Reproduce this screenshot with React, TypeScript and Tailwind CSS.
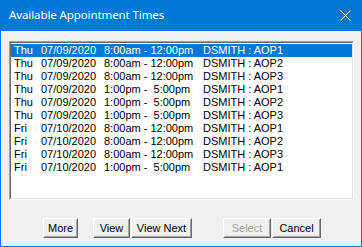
import React from "react";

const rows = [
  ["Thu", "07/09/2020", "8:00am - 12:00pm", "DSMITH : AOP1"],
  ["Thu", "07/09/2020", "8:00am - 12:00pm", "DSMITH : AOP2"],
  ["Thu", "07/09/2020", "8:00am - 12:00pm", "DSMITH : AOP3"],
  ["Thu", "07/09/2020", "1:00pm -  5:00pm", "DSMITH : AOP1"],
  ["Thu", "07/09/2020", "1:00pm -  5:00pm", "DSMITH : AOP2"],
  ["Thu", "07/09/2020", "1:00pm -  5:00pm", "DSMITH : AOP3"],
  ["Fri", "07/10/2020", "8:00am - 12:00pm", "DSMITH : AOP1"],
  ["Fri", "07/10/2020", "8:00am - 12:00pm", "DSMITH : AOP2"],
  ["Fri", "07/10/2020", "8:00am - 12:00pm", "DSMITH : AOP3"],
  ["Fri", "07/10/2020", "1:00pm -  5:00pm", "DSMITH : AOP1"],
];

function Btn({ label, w, disabled }: { label: string; w: string; disabled?: boolean }) {
  return (
    <div
      className={`${w} h-[20px] border border-t-white border-l-white border-b-[#696969] border-r-[#696969] bg-[#f0f0f0]`}
    >
      <div className="h-full w-full border border-t-[#f0f0f0] border-l-[#f0f0f0] border-b-[#a0a0a0] border-r-[#a0a0a0] flex items-center justify-center">
        <span
          className={`text-[11px] leading-[13px] ${disabled ? "text-[#a0a0a0]" : "text-black"}`}
          style={{ fontFamily: '"Liberation Sans", Arial, sans-serif' }}
        >
          {label}
        </span>
      </div>
    </div>
  );
}

export default function App() {
  return (
    <div className="w-[362px] h-[247px] bg-[#0078d7] flex flex-col px-[1px] pb-[1px]">
      <div className="h-[31px] flex items-center justify-between pl-[8px] pr-[10px]">
        <span
          className="text-white text-[11.5px] leading-[16px] tracking-[-0.1px] mt-[-1px]"
          style={{ fontFamily: '"Noto Sans", "Open Sans", sans-serif' }}
        >
          Available Appointment Times
        </span>
        <svg width="11" height="11" viewBox="0 0 11 11" className="mt-[-1px]">
          <path d="M0.5 0.5 L10.5 10.5 M10.5 0.5 L0.5 10.5" stroke="white" strokeWidth="1" />
        </svg>
      </div>
      <div className="flex-1 bg-[#f0f0f0] flex flex-col pt-[10px] pl-[8px]">
        <div className="w-[345px] h-[159px] border border-t-[#a0a0a0] border-l-[#a0a0a0] border-b-white border-r-white">
          <div className="h-full w-full border border-t-[#696969] border-l-[#696969] border-b-[#e3e3e3] border-r-[#e3e3e3] bg-white pt-[1px]">
            {rows.map((r, i) => (
              <div
                key={i}
                className={`flex h-[13px] pl-[3px] text-[11px] leading-[13px] whitespace-pre ${
                  i === 0 ? "bg-[#0078d7] text-white" : "text-black"
                }`}
                style={{ fontFamily: '"Liberation Sans", Arial, sans-serif' }}
              >
                <span className="w-[27px]">{r[0]}</span>
                <span className="w-[63px]">{r[1]}</span>
                <span className="w-[99px]">{r[2]}</span>
                <span>{r[3]}</span>
              </div>
            ))}
          </div>
        </div>
        <div className="flex mt-[18px]">
          <div className="ml-[34px]">
            <Btn label="More" w="w-[35px]" />
          </div>
          <div className="ml-[15px]">
            <Btn label="View" w="w-[37px]" />
          </div>
          <div className="ml-[1px]">
            <Btn label="View Next" w="w-[61px]" />
          </div>
          <div className="ml-[31px]">
            <Btn label="Select" w="w-[48px]" disabled />
          </div>
          <div className="ml-[1px]">
            <Btn label="Cancel" w="w-[49px]" />
          </div>
        </div>
      </div>
    </div>
  );
}
